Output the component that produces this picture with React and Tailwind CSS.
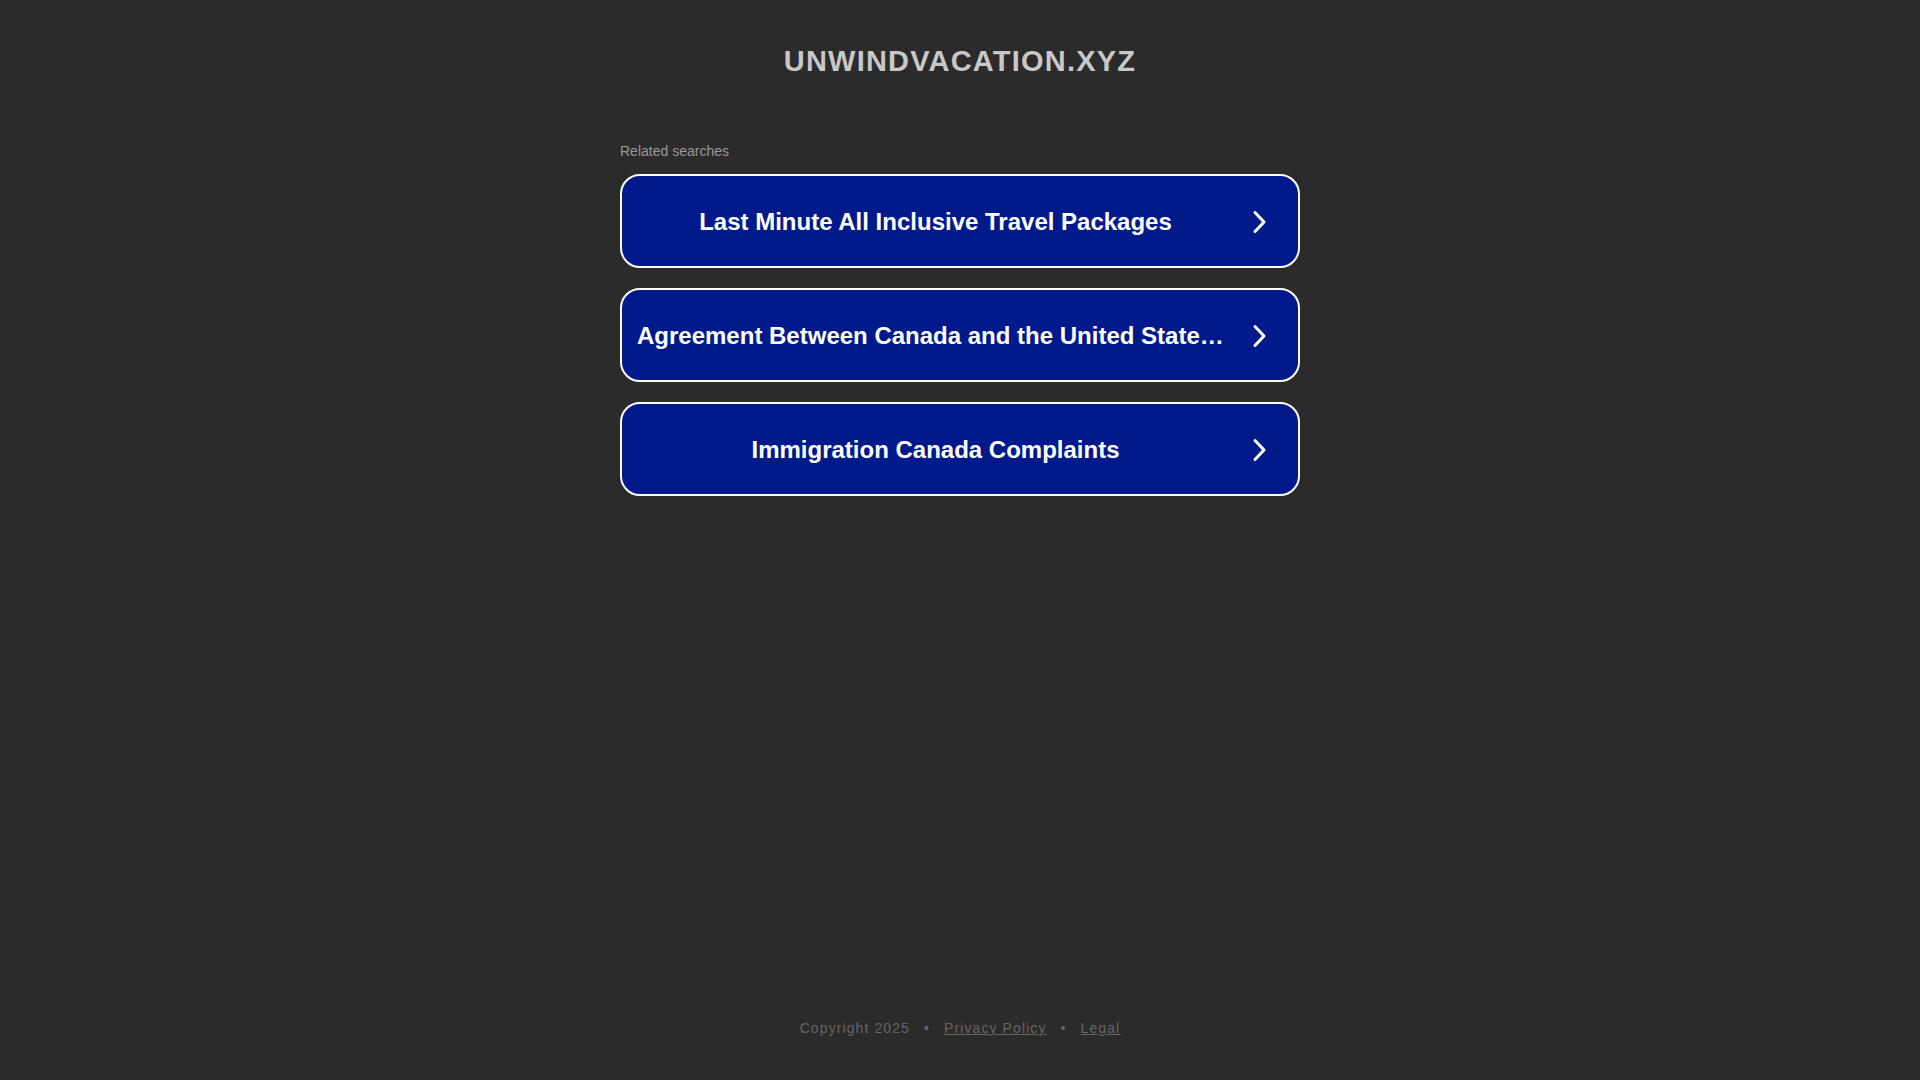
import React from 'react'

const searches = [
  'Last Minute All Inclusive Travel Packages',
  'Agreement Between Canada and the United States Regarding Immigration Enforcement',
  'Immigration Canada Complaints',
]

function Chevron() {
  return (
    <svg width="16" height="24" viewBox="0 0 16 24" className="ml-[18px] shrink-0" fill="none">
      <polyline points="3,2.5 12,12 3,21.5" stroke="#fff" strokeWidth="3" strokeLinecap="round" strokeLinejoin="round" />
    </svg>
  )
}

export default function App() {
  return (
    <div className="min-h-screen bg-[#2b2b2b] flex flex-col font-['Liberation_Sans',Arial,sans-serif]">
      <h1 className="pt-[44px] text-center text-[29px] leading-[34px] font-bold tracking-[1.2px] text-[#c8c8c8]">
        UNWINDVACATION.XYZ
      </h1>

      <div className="w-[680px] mx-auto mt-[65px]">
        <p className="text-[14px] leading-[16px] text-[#999] mb-[15px]">Related searches</p>
        {searches.map(s => (
          <a key={s} href="#" className="flex items-center h-[94px] mb-[20px] border-2 border-white rounded-[20px] bg-[#011a8b] pl-[15px] pr-[30px] pt-[2px]">
            <span className="flex-1 min-w-0 truncate text-center text-[24px] font-bold text-white">{s}</span>
            <Chevron />
          </a>
        ))}
      </div>

      <footer className="mt-auto pb-[44px] flex justify-center items-center gap-[14px] text-[14px] leading-[16px] tracking-[1.1px] text-[#666]">
        <span>Copyright 2025</span>
        <span>•</span>
        <a href="#" className="underline">Privacy Policy</a>
        <span>•</span>
        <a href="#" className="underline">Legal</a>
      </footer>
    </div>
  )
}
